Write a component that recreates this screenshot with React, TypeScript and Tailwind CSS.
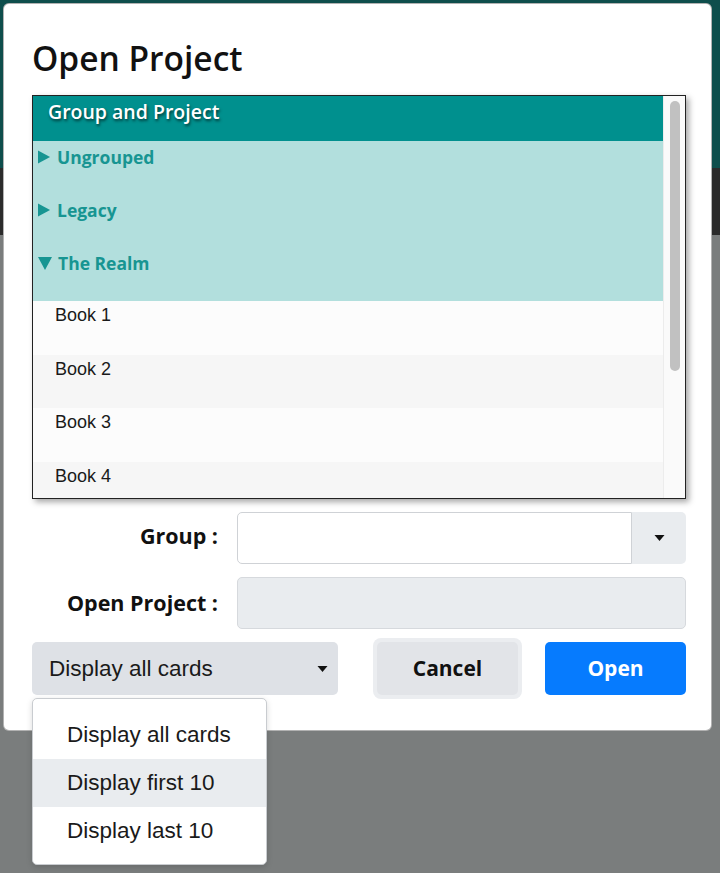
import { useState } from 'react'

const groups = [
  { name: 'Ungrouped', open: false },
  { name: 'Legacy', open: false },
  { name: 'The Realm', open: true },
]

const books = ['Book 1', 'Book 2', 'Book 3', 'Book 4']

const displayOptions = ['Display all cards', 'Display first 10', 'Display last 10']

const round = { fontFamily: '"Open Sans", "Noto Sans", sans-serif' }
const plain = { fontFamily: '"Liberation Sans", Arial, sans-serif' }

function Caret({ className }: { className?: string }) {
  return (
    <svg viewBox="0 0 10 6" className={className} fill="currentColor">
      <path d="M0 0h10L5 6z" />
    </svg>
  )
}

export default function App() {
  const [display] = useState(displayOptions[0])

  return (
    <div className="relative w-[720px] h-[873px] overflow-hidden bg-[#7a7d7d]">
      {/* page behind the backdrop */}
      <div className="h-[168px] bg-[#0e4e4c]" />
      <div className="h-[67px] bg-[#2b2b2b]" />

      {/* Modal */}
      <div
        className="absolute left-[3px] top-[3px] w-[709px] h-[728px] bg-white rounded-[6px] border border-black/30 pl-[28px] pr-[25px] pt-[32px]"
        style={round}
      >
        <h1 className="text-[33.5px] leading-[44px] font-semibold text-[#111]">Open Project</h1>

        {/* Tree table */}
        <div className="mt-[15px] h-[404px] w-[654px] flex border border-[#222] shadow-[3px_3px_6px_rgba(0,0,0,0.35)] overflow-hidden">
          <div className="flex-1 flex flex-col">
            <div className="h-[45px] shrink-0 bg-[#00908e] flex items-start pt-[3px] pl-[15px]">
              <span className="text-white text-[19.5px] leading-[26px] font-semibold [text-shadow:1px_2px_3px_rgba(0,0,0,0.6)]">
                Group and Project
              </span>
            </div>
            {groups.map((g, i) => (
              <div
                key={g.name}
                className={`${i === 2 ? 'h-[54px]' : 'h-[53px]'} shrink-0 bg-[#b2dfdd] pt-[5px] pl-[5px] flex items-start gap-[6px] text-[#179592]`}
              >
                <span className="h-[22px] flex items-center">
                  {g.open ? (
                    <svg viewBox="0 0 14 14" className="w-[14px] h-[14px]" fill="currentColor">
                      <path d="M0 1h14L7 14z" />
                    </svg>
                  ) : (
                    <svg viewBox="0 0 14 14" className="w-[13px] h-[14px]" fill="currentColor">
                      <path d="M0 0l13 7L0 14z" />
                    </svg>
                  )}
                </span>
                <span className="text-[17.5px] leading-[22px] font-bold">{g.name}</span>
              </div>
            ))}
            {books.map((b, i) => (
              <div
                key={b}
                className={`h-[53.5px] shrink-0 pt-[2px] pl-[22px] ${i % 2 === 0 ? 'bg-[#fcfcfc]' : 'bg-[#f6f6f6]'}`}
              >
                <span className="text-[18px] leading-[22px] text-[#1a1a1a]" style={plain}>
                  {b}
                </span>
              </div>
            ))}
          </div>
          {/* scrollbar */}
          <div className="w-[22px] shrink-0 bg-[#fafafa] border-l border-[#ececec] pt-[5px] flex justify-center">
            <div className="w-[10px] h-[270px] rounded-full bg-[#c1c1c1]" />
          </div>
        </div>

        {/* Form */}
        <div className="mt-[13px] grid grid-cols-[186px_449px] gap-x-[19px] gap-y-[13px] items-center">
          <label className="text-right text-[21.5px] leading-[28px] pb-[4px] font-bold text-[#111]">Group :</label>
          <div className="flex h-[52px]">
            <input className="flex-1 border border-[#cfd2d6] rounded-l-[5px] bg-white outline-none" />
            <div className="w-[54px] bg-[#e9ecef] rounded-r-[5px] flex items-center justify-center">
              <Caret className="w-[11px] h-[6px] text-[#111]" />
            </div>
          </div>
          <label className="text-right text-[21.5px] leading-[28px] font-bold text-[#111]">Open Project :</label>
          <div className="h-[52px] bg-[#e9ecef] border border-[#d6d9dd] rounded-[5px]" />
        </div>

        {/* Footer */}
        <div className="mt-[9px] flex items-center">
          <div
            className="w-[306px] h-[53px] bg-[#dee1e6] rounded-[5px] flex items-center justify-between pl-[17px] pr-[10px]"
            style={plain}
          >
            <span className="text-[22.5px] text-[#1a1a1a]">{display}</span>
            <Caret className="w-[11px] h-[6px] text-[#111]" />
          </div>
          <div className="ml-[35px] p-[4px] rounded-[8px] bg-[#ebedf0]">
            <button className="w-[141px] h-[53px] rounded-[5px] bg-[#e2e4e8] text-[21px] font-bold text-[#111]">
              Cancel
            </button>
          </div>
          <button className="ml-[23px] w-[141px] h-[53px] rounded-[5px] bg-[#067bfe] text-[21px] font-bold text-white">
            Open
          </button>
        </div>
      </div>

      {/* Select dropdown menu */}
      <div
        className="absolute left-[32px] top-[698px] w-[235px] h-[167px] bg-white border border-[#c9ccd0] rounded-[5px] pt-[12px] shadow-[0_2px_6px_rgba(0,0,0,0.15)]"
        style={plain}
      >
        {displayOptions.map((o, i) => (
          <div
            key={o}
            className={`h-[48px] flex items-center pl-[34px] text-[22.5px] text-[#1a1a1a] ${i === 1 ? 'bg-[#e9ecef]' : ''}`}
          >
            {o}
          </div>
        ))}
      </div>
    </div>
  )
}
